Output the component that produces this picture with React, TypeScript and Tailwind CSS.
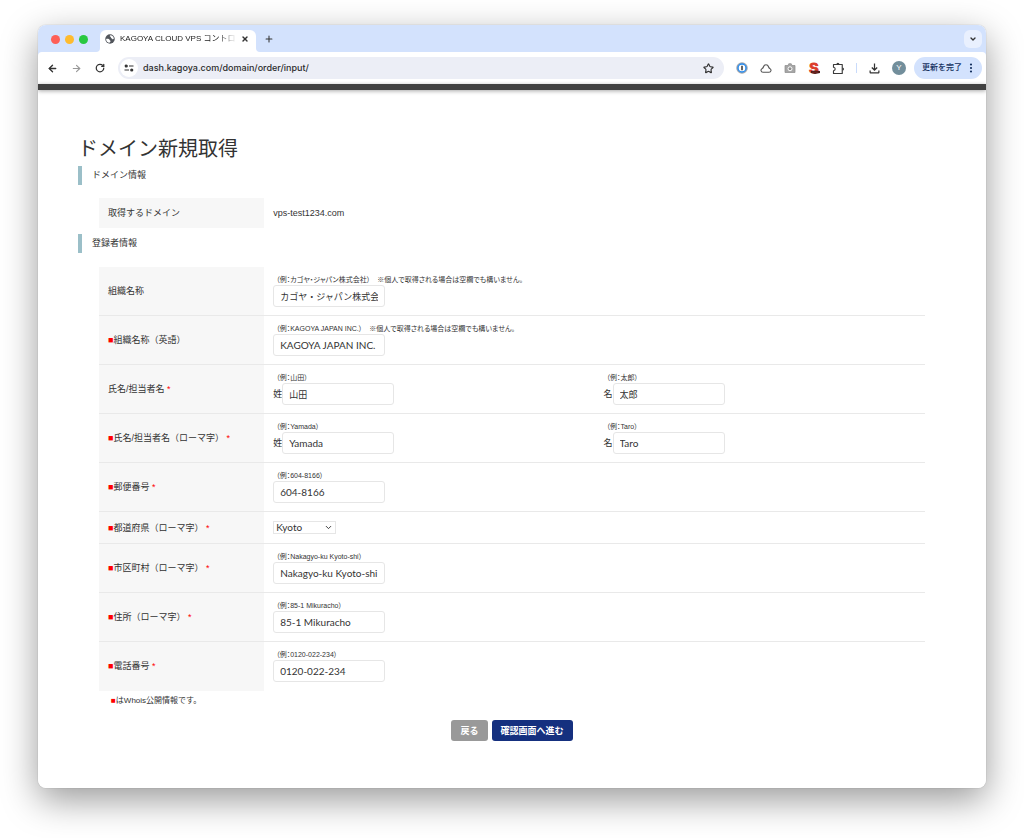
import {
  ArrowLeft,
  ArrowRight,
  ChevronDown,
  Plus,
  RotateCw,
  Star,
  X,
} from "lucide-react";
import type { ReactNode } from "react";
import { MdOutlineFileDownload } from "react-icons/md";

interface Field {
  id: string;
  value: string;
  hint: string;
  prefix?: string;
}

interface FormRow {
  label: string;
  isPublic?: boolean;
  required?: boolean;
  fields: Field[];
}

const ORG_NOTE = "※個人で取得される場合は空欄でも構いません。";

const rowsBeforePrefecture: FormRow[] = [
  {
    label: "組織名称",
    fields: [
      {
        id: "org",
        value: "カゴヤ・ジャパン株式会社",
        hint: `（例：カゴヤ・ジャパン株式会社）　${ORG_NOTE}`,
      },
    ],
  },
  {
    label: "組織名称（英語）",
    isPublic: true,
    fields: [
      {
        id: "org-en",
        value: "KAGOYA JAPAN INC.",
        hint: `（例：KAGOYA JAPAN INC.）　${ORG_NOTE}`,
      },
    ],
  },
  {
    label: "氏名/担当者名",
    required: true,
    fields: [
      { id: "last-name", value: "山田", hint: "（例：山田）", prefix: "姓" },
      { id: "first-name", value: "太郎", hint: "（例：太郎）", prefix: "名" },
    ],
  },
  {
    label: "氏名/担当者名（ローマ字）",
    isPublic: true,
    required: true,
    fields: [
      {
        id: "last-name-en",
        value: "Yamada",
        hint: "（例：Yamada）",
        prefix: "姓",
      },
      {
        id: "first-name-en",
        value: "Taro",
        hint: "（例：Taro）",
        prefix: "名",
      },
    ],
  },
  {
    label: "郵便番号",
    isPublic: true,
    required: true,
    fields: [{ id: "zip", value: "604-8166", hint: "（例：604-8166）" }],
  },
];

const rowsAfterPrefecture: FormRow[] = [
  {
    label: "市区町村（ローマ字）",
    isPublic: true,
    required: true,
    fields: [
      {
        id: "city",
        value: "Nakagyo-ku Kyoto-shi",
        hint: "（例：Nakagyo-ku Kyoto-shi）",
      },
    ],
  },
  {
    label: "住所（ローマ字）",
    isPublic: true,
    required: true,
    fields: [
      { id: "address", value: "85-1 Mikuracho", hint: "（例：85-1 Mikuracho）" },
    ],
  },
  {
    label: "電話番号",
    isPublic: true,
    required: true,
    fields: [
      { id: "tel", value: "0120-022-234", hint: "（例：0120-022-234）" },
    ],
  },
];

function PublicMark() {
  return <span className="text-[#ff0000]">■</span>;
}

function RowHeader({
  htmlFor,
  row,
}: {
  htmlFor: string;
  row: Omit<FormRow, "fields">;
}) {
  return (
    <th
      scope="row"
      className="w-1/5 bg-[#f7f7f7] pl-[9px] text-left align-middle font-normal"
    >
      <label htmlFor={htmlFor}>
        {row.isPublic && <PublicMark />}
        {row.label}
        {row.required && <span className="text-[#ff0000]"> *</span>}
      </label>
    </th>
  );
}

function TextField({ field, label }: { field: Field; label: string }) {
  const isLatin = /^[\x20-\x7e]+$/.test(field.value);
  return (
    <div className="pt-2 pb-2 pl-[9px]">
      <p className="pl-[3px] text-[7px] leading-[10px] whitespace-nowrap [font-feature-settings:'palt']">
        {field.hint}
      </p>
      <div className="flex items-center">
        {field.prefix && <label htmlFor={field.id}>{field.prefix}</label>}
        <input
          id={field.id}
          type="text"
          aria-label={field.prefix ? `${label} ${field.prefix}` : undefined}
          defaultValue={field.value}
          className={`h-[22px] w-28 rounded-[3px] border border-[#e6e6e6] bg-white px-1.5 outline-none ${
            isLatin
              ? "font-[Lato,sans-serif] text-[10px]"
              : "text-[9px]"
          }`}
        />
      </div>
    </div>
  );
}

function FieldRow({ row }: { row: FormRow }) {
  return (
    <tr className="border-b border-[#e9e9e9] last:border-transparent">
      <RowHeader htmlFor={row.fields[0].id} row={row} />
      <td className="p-0">
        <div className="grid grid-cols-2">
          {row.fields.map((field) => (
            <TextField key={field.id} field={field} label={row.label} />
          ))}
        </div>
      </td>
    </tr>
  );
}

function SectionTitle({ children }: { children: ReactNode }) {
  return (
    <h2 className="border-l-4 border-[#9bbfc8] pl-2.5 leading-[19px]">
      {children}
    </h2>
  );
}

function GlobeIcon() {
  return (
    <svg width="10" height="10" viewBox="0 0 20 20" aria-hidden="true">
      <circle cx="10" cy="10" r="9.5" fill="#51555b" />
      <path
        d="M2.2 10c3-.6 6-.3 6.800 1.500s2 1.200 2 2.800-1.700 1-1.700 3.300C5 17.500 2.200 14 2.200 10zM10.500 2.500c-1.500 1.500-1 2.800.5 3s0 2.500 1.800 2.800 1.200 2.200 2.700 2.200 1.200-.8 2.200-1C17.500 5.500 14.500 2.600 10.500 2.500z"
        fill="#fff"
      />
    </svg>
  );
}

function SiteSettingsIcon() {
  return (
    <svg
      width="10"
      height="10"
      viewBox="0 0 20 20"
      fill="none"
      stroke="#333"
      strokeWidth="2.4"
      aria-hidden="true"
    >
      <circle cx="4.500" cy="6" r="2" fill="#333" />
      <path d="M10 6h9M1 14h9" />
      <circle cx="15.500" cy="14" r="2" fill="#333" />
    </svg>
  );
}

function TabStrip() {
  return (
    <div className="flex h-[27px] items-end bg-[#d3e2fd]">
      <div className="flex h-[27px] items-center gap-[5px] pt-[1px] pl-[13px]">
        <span className="size-[9px] rounded-full bg-[#fe5f57]" />
        <span className="size-[9px] rounded-full bg-[#febb2e]" />
        <span className="size-[9px] rounded-full bg-[#28c840]" />
      </div>
      <svg
        className="ml-2 text-white"
        width="4"
        height="4"
        viewBox="0 0 4 4"
        aria-hidden="true"
      >
        <path d="M4 0v4H0a4 4 0 0 0 4-4z" fill="currentColor" />
      </svg>
      <div className="flex h-[22px] w-[156px] items-center rounded-t-md bg-white pr-[7px] pb-1 pl-[5px]">
        <GlobeIcon />
        <span className="ml-[5px] min-w-0 flex-1 overflow-hidden font-['Liberation_Sans','Noto_Sans_CJK_JP',sans-serif] text-[8px] leading-3 whitespace-nowrap text-[#222] [mask-image:linear-gradient(to_right,black_85%,transparent)]">
          KAGOYA CLOUD VPS コントロ
        </span>
        <button type="button" aria-label="タブを閉じる" className="ml-1">
          <X size={8} strokeWidth={4} />
        </button>
      </div>
      <svg
        className="text-white"
        width="4"
        height="4"
        viewBox="0 0 4 4"
        aria-hidden="true"
      >
        <path d="M0 0v4h4a4 4 0 0 1-4-4z" fill="currentColor" />
      </svg>
      <button type="button" aria-label="新しいタブ" className="ml-1 pb-2">
        <Plus size={10} strokeWidth={2.500} />
      </button>
      <button
        type="button"
        aria-label="タブを検索"
        className="mr-1 mb-1 ml-auto flex size-[18px] items-center justify-center rounded-md bg-[#e9f0fe]"
      >
        <ChevronDown size={8} strokeWidth={4} />
      </button>
    </div>
  );
}

function Extensions() {
  return (
    <div className="flex items-center gap-3">
      <button type="button" aria-label="1Password">
        <svg width="12" height="12" viewBox="0 0 24 24" aria-hidden="true">
          <circle cx="12" cy="12" r="11.500" fill="#a3a7ad" />
          <circle
            cx="12"
            cy="12"
            r="8"
            fill="#fff"
            stroke="#2a8df0"
            strokeWidth="3"
          />
          <rect x="10.500" y="7.500" width="3" height="9" fill="#333" />
        </svg>
      </button>
      <button type="button" aria-label="クラウド">
        <svg
          width="12"
          height="12"
          viewBox="0 0 24 24"
          fill="none"
          stroke="#555"
          strokeWidth="2.200"
          strokeLinejoin="round"
          aria-hidden="true"
        >
          <path d="M6 20.500h12c4.500 0 5.500-5.500 1.500-7.500-1.500-1-2-1.500-2.500-3.500-1.500-5.500-8.500-5.500-10 0-.5 2-1 2.500-2.500 3.500C.5 15 1.500 20.500 6 20.500z" />
        </svg>
      </button>
      <button type="button" aria-label="スクリーンショット">
        <svg width="12" height="12" viewBox="0 0 24 24" aria-hidden="true">
          <path
            d="M2 7h6l1.500-3.500h5L16 7h6v14H2z"
            fill="#a6a6a6"
            stroke="#8f8f8f"
            strokeWidth="1.500"
          />
          <circle
            cx="12"
            cy="13.500"
            r="4"
            fill="#8f8f8f"
            stroke="#fff"
            strokeWidth="2"
          />
        </svg>
      </button>
      <button
        type="button"
        aria-label="S"
        className="relative h-3 w-3 text-center text-[14px] leading-3 font-black text-[#dc3b2a] [-webkit-text-stroke:1px_#dc3b2a]"
      >
        S
        <svg
          className="absolute right-0 bottom-0"
          width="10"
          height="4"
          viewBox="0 0 10 4"
          aria-hidden="true"
        >
          <path d="M1 1 5 .5l5 .5v2L5 4 1 3z" fill="#4a1c18" />
          <path d="M2.500 2.200h6" stroke="#a33" strokeDasharray="1 1" />
        </svg>
      </button>
      <button type="button" aria-label="拡張機能">
        <svg
          width="13"
          height="13"
          viewBox="0 0 26 26"
          fill="none"
          stroke="#3a3a3a"
          strokeWidth="2.300"
          strokeLinejoin="round"
          aria-hidden="true"
        >
          <path d="M3 5h17.500v18H3v-5.500c4.500-.5 4.500-6.500 0-7z" />
          <path
            d="M8.800 4.500a3 3 0 0 1 6 0zM21 11a3 3 0 0 1 0 6z"
            fill="#3a3a3a"
            stroke="none"
          />
        </svg>
      </button>
    </div>
  );
}

function Toolbar() {
  return (
    <div className="bg-[#d3e2fd]">
      <div className="flex h-8 items-center rounded-t bg-white pr-1 pl-[9px] text-[#333]">
        <div className="flex items-center gap-[13px]">
          <button type="button" aria-label="戻る">
            <ArrowLeft size={11} strokeWidth={3} />
          </button>
          <button type="button" aria-label="進む" className="text-[#999]">
            <ArrowRight size={11} strokeWidth={2.500} />
          </button>
          <button type="button" aria-label="再読み込み">
            <RotateCw size={10} strokeWidth={3} />
          </button>
        </div>
        <div className="ml-[13px] flex h-[22px] min-w-0 flex-1 items-center rounded-full bg-[#eceef6] pr-2.5 pl-0.5">
          <button
            type="button"
            aria-label="サイト情報"
            className="flex size-[18px] items-center justify-center rounded-full bg-white"
          >
            <SiteSettingsIcon />
          </button>
          <input
            type="text"
            aria-label="アドレス"
            defaultValue="dash.kagoya.com/domain/order/input/"
            className="ml-[5px] min-w-0 flex-1 bg-transparent font-[Inter,sans-serif] text-[9px] font-medium text-[#2b2b2b] outline-none"
          />
          <button type="button" aria-label="ブックマーク">
            <Star size={11} strokeWidth={2.500} />
          </button>
        </div>
        <div className="ml-3">
          <Extensions />
        </div>
        <span className="mr-2.5 ml-[11px] h-2.5 w-px bg-[#c9dbfb]" />
        <button type="button" aria-label="ダウンロード">
          <MdOutlineFileDownload size={15} />
        </button>
        <button
          type="button"
          aria-label="プロフィール"
          className="ml-2.5 size-3.5 rounded-full bg-[#728e9b] text-[8px] leading-3.5 text-white"
        >
          Y
        </button>
        <button
          type="button"
          className="ml-2 flex h-[22px] items-center gap-1.5 rounded-full bg-[#d3e2fd] pr-[9px] pl-2 text-[8px] font-medium text-[#14305f]"
        >
          <span className="pr-px">更新を完了</span>
          <svg
            width="4"
            height="10"
            viewBox="0 0 4 10"
            fill="currentColor"
            aria-hidden="true"
          >
            <circle cx="2" cy="1.500" r="1.100" />
            <circle cx="2" cy="5" r="1.100" />
            <circle cx="2" cy="8.500" r="1.100" />
          </svg>
        </button>
      </div>
    </div>
  );
}

function OrderForm() {
  return (
    <form
      className="px-10 pt-11 pb-[47px]"
      onSubmit={(e) => e.preventDefault()}
    >
      <h1 className="mb-0.5 text-[20px] leading-[30px]">ドメイン新規取得</h1>

      <SectionTitle>ドメイン情報</SectionTitle>
      <div className="mx-[21px] mt-[13px] mb-1.5">
        <table className="w-full table-fixed">
          <tbody>
            <tr className="h-[30px]">
              <th
                scope="row"
                className="w-1/5 bg-[#f7f7f7] pl-[9px] text-left font-normal"
              >
                取得するドメイン
              </th>
              <td className="pl-[9px]">vps-test1234.com</td>
            </tr>
          </tbody>
        </table>
      </div>

      <SectionTitle>登録者情報</SectionTitle>
      <div className="mx-[21px] mt-3.5">
        <table className="w-full table-fixed border-collapse">
          <tbody>
            {rowsBeforePrefecture.map((row) => (
              <FieldRow key={row.label} row={row} />
            ))}
            <tr className="border-b border-[#e9e9e9]">
              <RowHeader
                htmlFor="prefecture"
                row={{
                  label: "都道府県（ローマ字）",
                  isPublic: true,
                  required: true,
                }}
              />
              <td className="py-[9px] pl-[9px]">
                <div className="flex w-[63px] items-center border border-[#e6e6e6] pr-0.5">
                  <select
                    id="prefecture"
                    defaultValue="Kyoto"
                    className="-my-px h-[13px] min-w-0 flex-1 appearance-none bg-transparent pl-0.5 font-[Lato,sans-serif] text-[10px] leading-[13px] outline-none"
                  >
                    <option>Kyoto</option>
                    <option>Osaka</option>
                    <option>Shiga</option>
                  </select>
                  <ChevronDown
                    size={9}
                    strokeWidth={2.500}
                    className="pointer-events-none"
                  />
                </div>
              </td>
            </tr>
            {rowsAfterPrefecture.map((row) => (
              <FieldRow key={row.label} row={row} />
            ))}
          </tbody>
        </table>
        <p className="pl-3 text-[8px] leading-5">
          <PublicMark />
          はWhois公開情報です。
        </p>
      </div>

      <div className="mt-[9px] flex justify-center gap-1 font-bold text-white">
        <button type="button" className="h-[21px] rounded-[3px] bg-[#999] px-[9px]">
          戻る
        </button>
        <button
          type="submit"
          className="h-[21px] rounded-[3px] bg-[#15307f] px-[9px]"
        >
          確認画面へ進む
        </button>
      </div>
    </form>
  );
}

export default function App() {
  return (
    <div className="overflow-hidden bg-white px-[38px] pt-[25px] pb-[50px] font-['Liberation_Sans','Noto_Sans_CJK_JP',sans-serif] text-[9px] leading-3 text-[#333]">
      <div className="rounded-lg shadow-[0_12px_36px_rgba(0,0,0,0.4),0_0_1px_rgba(0,0,0,0.4)]">
        <div className="overflow-hidden rounded-lg bg-white">
          <TabStrip />
          <Toolbar />
          <div className="h-1.5 bg-[#404040] shadow-[0_1px_4px_rgba(0,0,0,0.35)]" />
          <OrderForm />
        </div>
      </div>
    </div>
  );
}
